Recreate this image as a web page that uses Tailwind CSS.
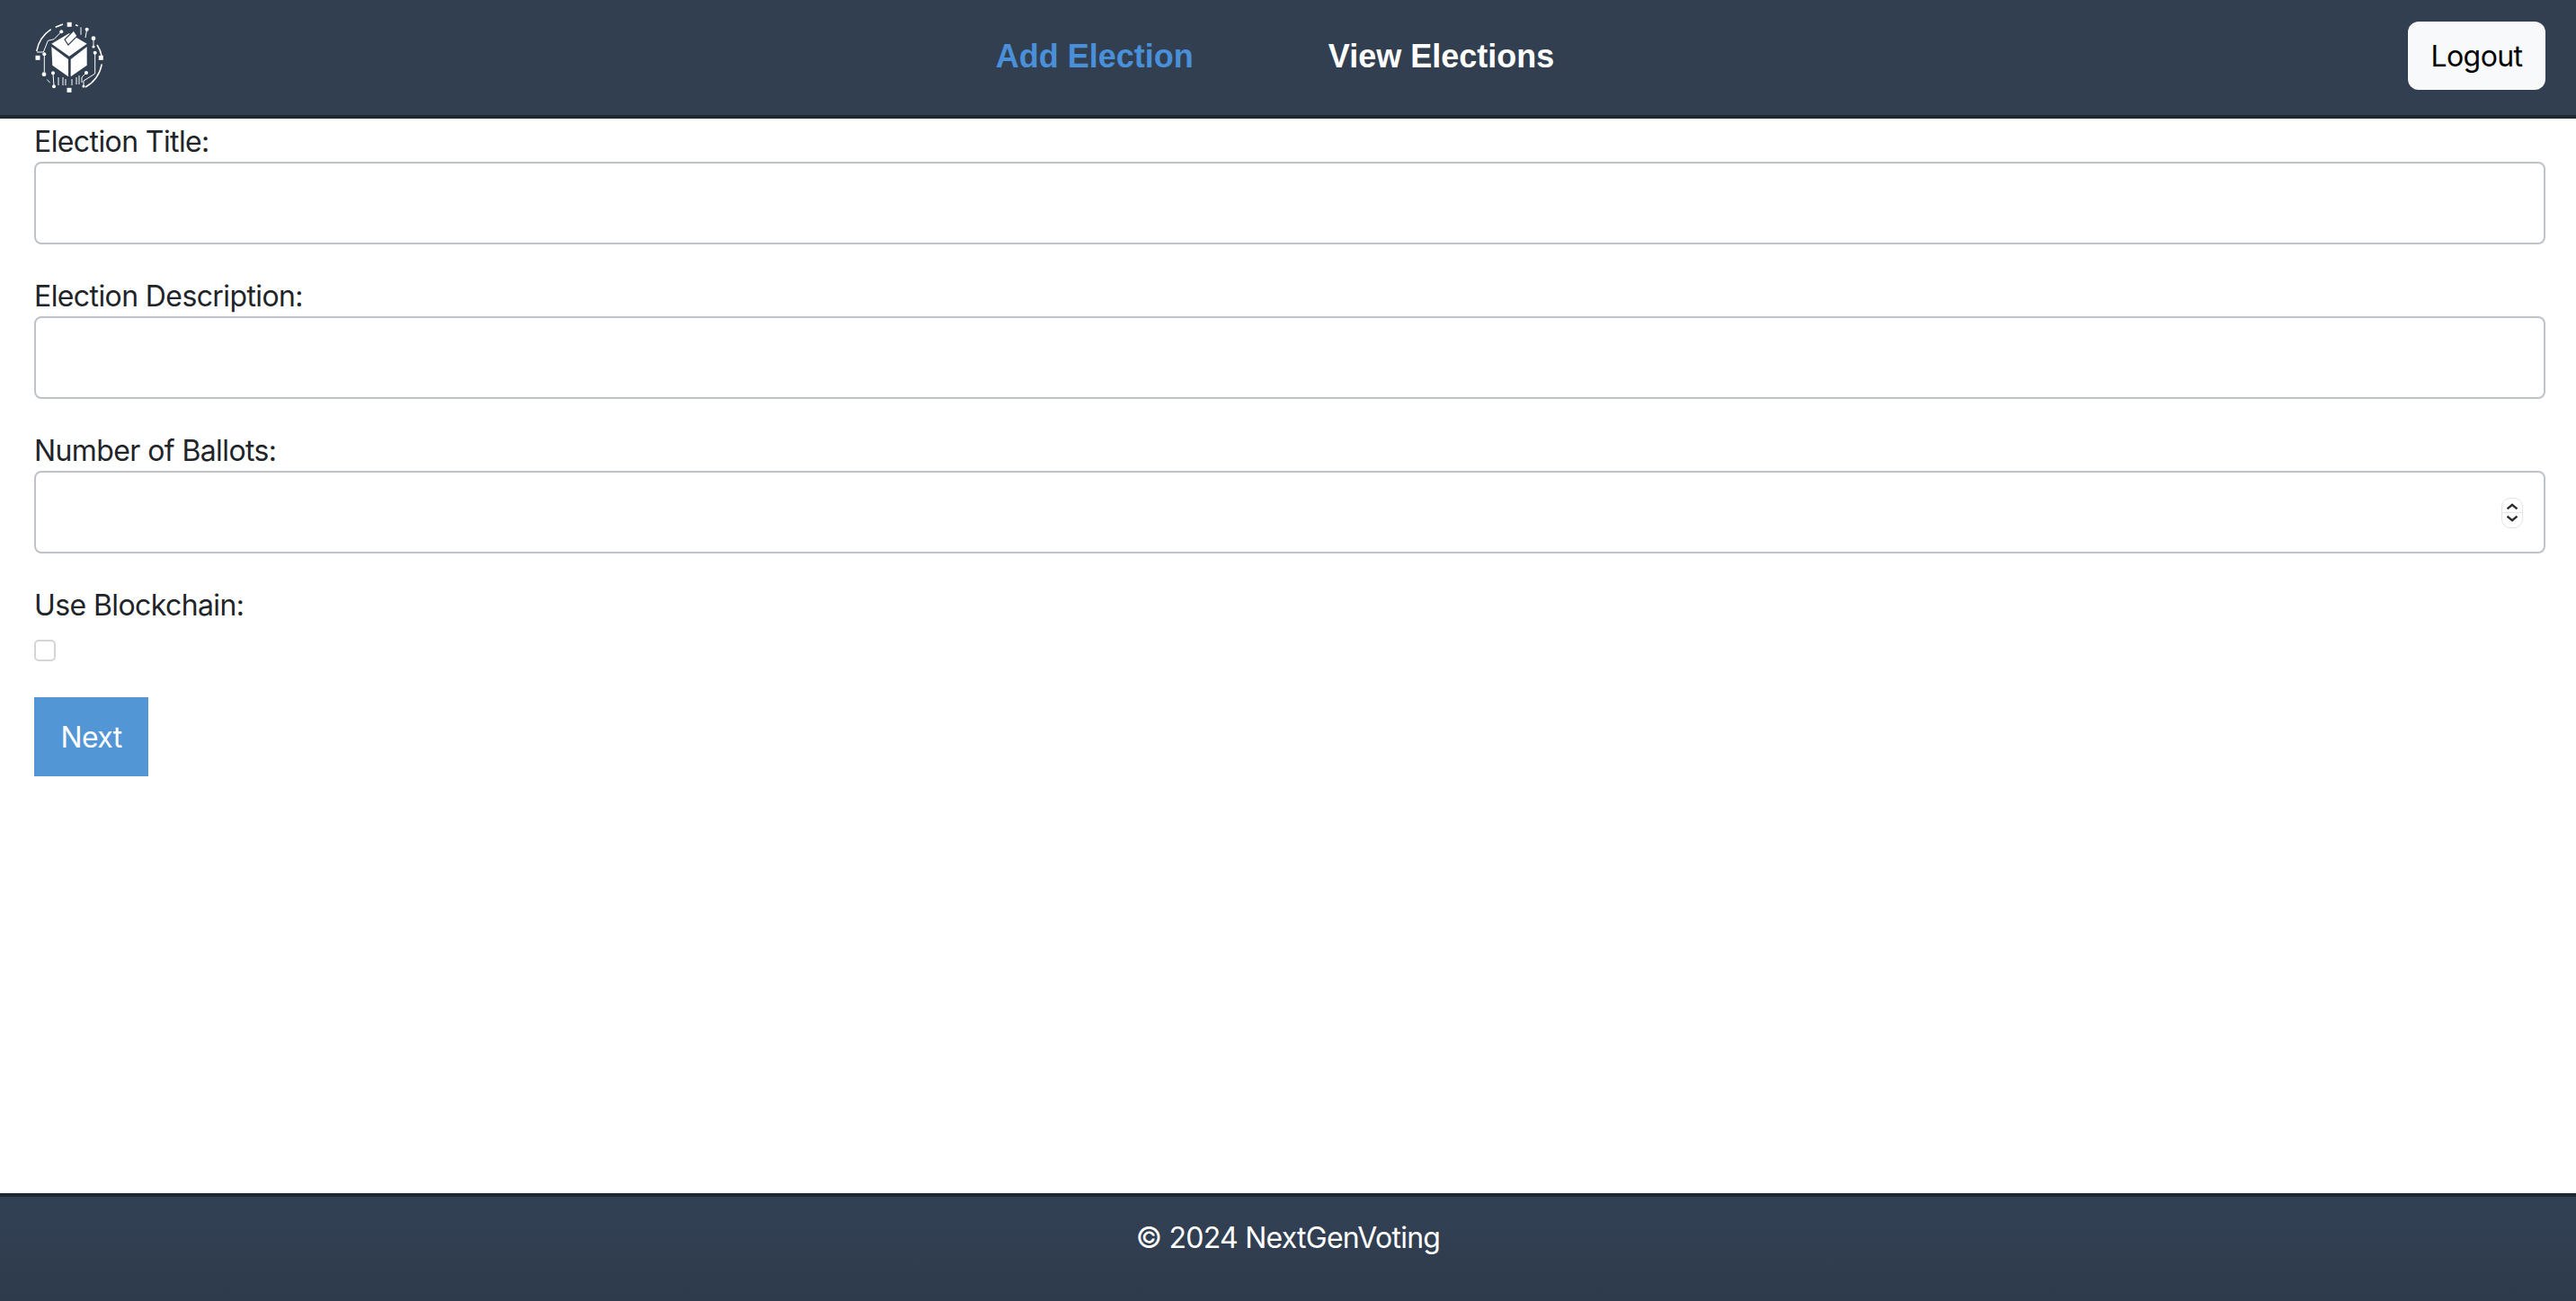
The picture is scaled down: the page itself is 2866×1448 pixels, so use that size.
<!DOCTYPE html>
<html lang="en">
<head>
    <meta charset="UTF-8">
    <meta name="viewport" content="width=device-width, initial-scale=1.0">
    <title>NextGenVoting</title>
    <script src="https://cdn.jsdelivr.net/npm/@tailwindcss/browser@4"></script>
</head>
<body class="bg-white text-[#212529] font-['Inter',sans-serif] text-[32px] leading-[48px] tracking-[-0.6px]">
    <div class="h-screen flex flex-col">
        <header class="h-[132px] shrink-0 bg-[#323f50] border-b-4 border-[#1f2731] flex items-center justify-between px-[34px] pl-[38px]">
            <div class="w-[119px] h-[124px] flex items-center">
                <svg viewBox="0 0 80 80" class="w-[80px] h-[80px]" fill="none" stroke="#fff" stroke-width="1">
                    <!-- outer ring -->
                    <g stroke-width="1.5">
                        <path d="M2.7 33A38 38 0 0 1 18.7 8.7"/>
                        <path d="M23.7 6.3 32 3M46 3.7l2.7 1"/>
                        <path d="M70 26q4 6 5 12"/>
                        <path d="M75.3 47.3A38 38 0 0 1 57 73"/>
                    </g>
                    <!-- circuit traces -->
                    <path d="M3 34h7.300l5-12.700 6.700-1.600 8.300-8.400"/>
                    <path d="M52 6.300V14.700M58.700 8.700 57 18M66 18.700V29"/>
                    <path d="M67.700 34.700V58l-12.700 8v6"/>
                    <path d="M11.300 36.300V56M14.300 64.700l3.400 3.300M21 57.300l1 15"/>
                    <path d="M27 62v9M32 62v9M35 64v7M42 64v7M47 62v8M50 60v10M58 57l-5 5v6"/>
                    <!-- ballot box -->
                    <g fill="#fff" stroke="none">
                        <path d="M19.300 24.700 39 13l19.700 11.700L39 38.700Z"/>
                        <path d="M19.300 28 38 42v19.300L20.300 48.700Z"/>
                        <path d="M40.700 42 58.700 28v20.700L40.700 61.300Z"/>
                    </g>
                    <path d="M34 20l10-10 4 6-10 10Z" fill="#fff" stroke="#323f50" stroke-width="1.200"/>
                    <!-- nodes -->
                    <g fill="#fff" stroke="none">
                        <rect x="36.700" y="0.800" width="5" height="5"/>
                        <rect x="1.500" y="37.800" width="5" height="5"/>
                        <rect x="71.800" y="37.800" width="5" height="5"/>
                        <rect x="36.500" y="73.800" width="5" height="5"/>
                        <circle cx="30.300" cy="11.300" r="2"/>
                        <circle cx="58.700" cy="8.700" r="2"/>
                        <circle cx="66" cy="18.700" r="2.400"/>
                        <circle cx="66" cy="28" r="1.600"/>
                        <circle cx="67.700" cy="34.700" r="2"/>
                        <circle cx="11.300" cy="36.300" r="2"/>
                        <circle cx="11" cy="58.700" r="2.400"/>
                        <circle cx="21" cy="57.300" r="2"/>
                        <circle cx="58" cy="57" r="2"/>
                        <circle cx="22" cy="72.300" r="2"/>
                        <circle cx="55" cy="72" r="1.600"/>
                    </g>
                </svg>
            </div>
            <nav class="flex items-center gap-[150px] font-['Liberation_Sans',sans-serif] font-bold text-[36px] leading-[44px] tracking-normal text-white -mt-[2px] ml-[1px]">
                <a href="#" class="text-[#4a90d9]">Add Election</a>
                <a href="#">View Elections</a>
            </nav>
            <button class="w-[153px] h-[76px] mt-[-4px] pt-[2px] bg-[#f8f9fa] rounded-[12px] text-black text-[32px]">Logout</button>
        </header>

        <main class="flex-1 pl-[38px] pr-[34px]">
            <form>
                <div class="mb-[32px]">
                    <label class="block h-[48px] pt-[2px]" for="title">Election Title:</label>
                    <input id="title" type="text" class="block w-full h-[92px] bg-white border-2 border-[#bfc3c7] rounded-[8px]">
                </div>
                <div class="mb-[32px]">
                    <label class="block h-[48px] pt-[2px]" for="description">Election Description:</label>
                    <input id="description" type="text" class="block w-full h-[92px] bg-white border-2 border-[#bfc3c7] rounded-[8px]">
                </div>
                <div class="mb-[32px]">
                    <label class="block h-[48px] pt-[2px]" for="ballots">Number of Ballots:</label>
                    <div class="relative">
                        <input id="ballots" type="number" class="block w-full h-[92px] bg-white border-2 border-[#bfc3c7] rounded-[8px] [appearance:textfield]">
                        <div class="absolute right-[25px] top-[30px] w-[24px] h-[34px] rounded-[10px] border border-[#e4e4e4] bg-white">
                            <svg viewBox="0 0 24 34" class="w-full h-full" fill="none" stroke="#2b2b2b" stroke-width="2.600">
                                <path d="M6 12l6-5 6 5M6 21l6 5 6-5"/>
                                <path d="M0 16.500h24" stroke="#e4e4e4" stroke-width="1"/>
                            </svg>
                        </div>
                    </div>
                </div>
                <div class="mb-[16px]">
                    <label class="block h-[48px] pt-[2px] mb-[16px]" for="blockchain">Use Blockchain:</label>
                    <input id="blockchain" type="checkbox" class="block appearance-none w-[24px] h-[24px] bg-white border-2 border-[#d5d5d5] rounded-[5px]">
                </div>
                <button type="button" class="block mt-[40px] w-[127px] h-[88px] pt-[2px] bg-[#5296d5] text-white">Next</button>
            </form>
        </main>

        <footer class="h-[120px] shrink-0 bg-linear-to-b from-[#334155] to-[#2e3b4c] border-t-4 border-[#1f2731] text-white text-center pt-[22px]">
            <p class="tracking-[-0.75px]">© 2024 NextGenVoting</p>
        </footer>
    </div>
</body>
</html>
